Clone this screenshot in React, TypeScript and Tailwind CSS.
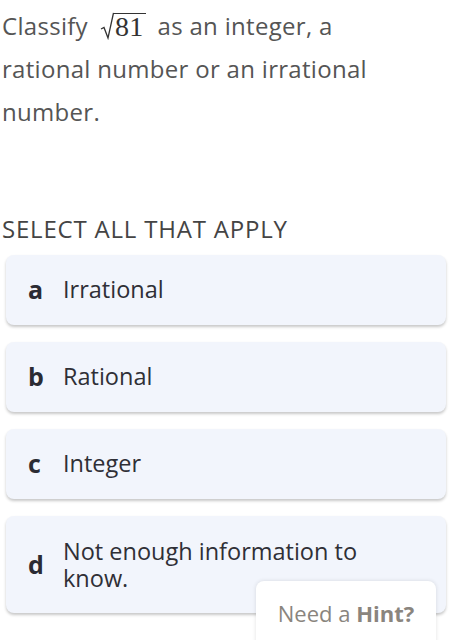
import React from "react";

const options = [
  { key: "a", label: "Irrational" },
  { key: "b", label: "Rational" },
  { key: "c", label: "Integer" },
  { key: "d", label: "Not enough information to know." },
];

const Sqrt81 = () => (
  <span className="inline-flex items-end align-middle mx-[12px] relative top-[-3px]">
    <svg width="14" height="28" viewBox="0 0 14 28" className="block">
      <path d="M1 17 L4 15.5 L8 26 L13.5 1" fill="none" stroke="#333" strokeWidth="1.3" />
    </svg>
    <span
      className="border-t border-[#333] leading-[26px] text-[28px] text-[#333] pl-[1px] pr-[2px]"
      style={{ fontFamily: '"Liberation Serif", serif' }}
    >
      81
    </span>
  </span>
);

export default function App() {
  return (
    <div
      className="w-[457px] h-[640px] bg-white overflow-hidden relative"
      style={{ fontFamily: '"Open Sans", sans-serif', fontVariantLigatures: "none" }}
    >
      <p className="pl-[2px] w-[380px] text-[24px] tracking-[0.3px] leading-[43px] text-[#555] pt-[4px]">
        Classify
        <Sqrt81 />
        as an integer, a rational number or an irrational number.
      </p>

      <div className="mt-[82px] pl-[2px] text-[24px] leading-[28px] tracking-[0.8px] text-[#444]">
        SELECT ALL THAT APPLY
      </div>

      <div className="mt-[12px] ml-[6px] w-[440px] flex flex-col gap-[17px]">
        {options.map((o) => (
          <div
            key={o.key}
            className={`flex items-center rounded-[8px] bg-[#f2f5fc] shadow-[0_2px_3px_rgba(0,0,0,0.22)] pl-[22px] pr-[20px] ${
              o.key === "d" ? "h-[97px]" : "h-[70px]"
            }`}
          >
            <span className="w-[35px] shrink-0 text-[25px] font-bold text-[#2b2b33]">{o.key}</span>
            <span className={`text-[23.5px] text-[#2f2f36] ${o.key === "d" ? "leading-[27px] max-w-[330px]" : ""}`}>
              {o.label}
            </span>
          </div>
        ))}
      </div>

      <div className="absolute left-[256px] top-[581px] w-[180px] h-[70px] bg-white rounded-[8px] shadow-[0_0_4px_rgba(0,0,0,0.12)] flex justify-center pt-[16px]">
        <span className="text-[22px] text-[#8a857e]">
          Need a <span className="font-bold">Hint?</span>
        </span>
      </div>
    </div>
  );
}
